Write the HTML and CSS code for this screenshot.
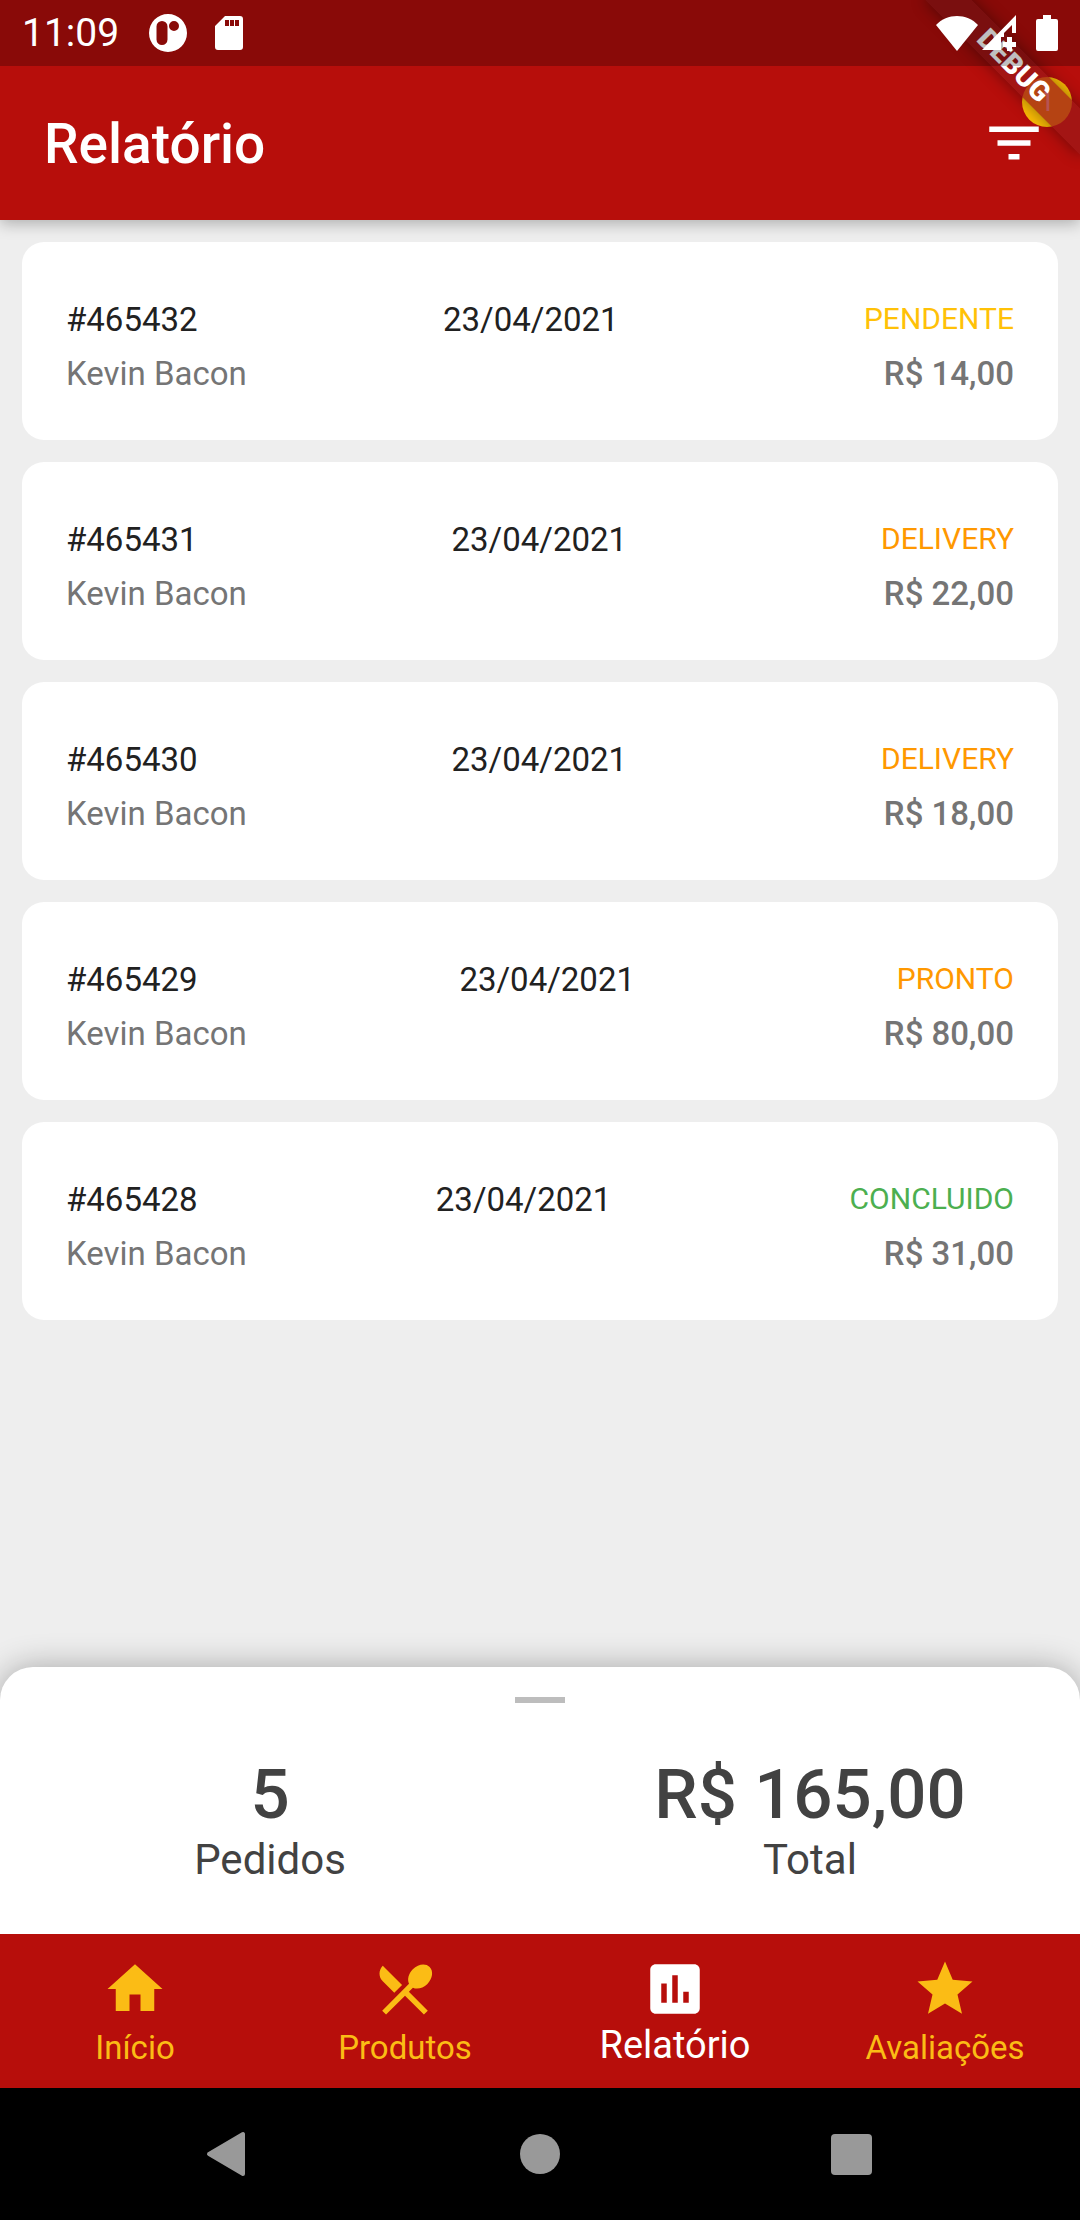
FILE: index.html
```html
<!DOCTYPE html>
<html lang="pt-BR">
<head>
<meta charset="utf-8">
<meta name="viewport" content="width=device-width, initial-scale=1">
<title>Relatório</title>
<link rel="stylesheet" href="styles.css">
</head>
<body>
<div class="screen">
  <header class="top">
    <div class="status-bar">
      <div class="status-group">
        <span class="clock">11:09</span>
        <svg class="status-app" viewBox="0 0 38 38" aria-hidden="true"><path fill="#fff" fill-rule="evenodd" d="M19 0a19 19 0 1 1 0 38a19 19 0 0 1 0-38zM13 7a5.500 5.500 0 0 0-5.500 5.500v13a5.500 5.500 0 0 0 11 0v-13a5.500 5.500 0 0 0-5.500-5.500zM25 7a5 5 0 1 0 0 10a5 5 0 0 0 0-10z"/></svg>
        <svg class="status-sd" viewBox="0 0 28 34" aria-hidden="true"><path fill="#fff" fill-rule="evenodd" d="M10 0h15a3 3 0 0 1 3 3v28a3 3 0 0 1-3 3H3a3 3 0 0 1-3-3V10zM10 4v6h4V4zM15 4v6h4V4zM20 4v6h4V4z"/></svg>
      </div>
      <div class="status-group status-right">
        <svg class="status-wifi" viewBox="0 0 42 35" aria-hidden="true"><path fill="#fff" d="M21 35L0 9C11-3 31-3 42 9z"/></svg>
        <svg class="status-signal" viewBox="0 0 34 36" aria-hidden="true"><path fill="#fff" d="M0 35L34 0v18h-4V10L22 18v4h-3v13z"/><path fill="#fff" d="M25 22h5v5h4v5h-4v4h-5v-4h-4v-5h4z"/></svg>
        <svg class="status-battery" viewBox="0 0 22 36" aria-hidden="true"><path fill="#fff" d="M7 0h8v4h5a2 2 0 0 1 2 2v28a2 2 0 0 1-2 2H2a2 2 0 0 1-2-2V6a2 2 0 0 1 2-2h5z"/></svg>
      </div>
    </div>
    <div class="app-bar">
      <h1 class="title">Relatório</h1>
      <button class="filter" type="button" aria-label="Filtrar">
        <svg class="icon" viewBox="0 0 24 24" aria-hidden="true"><path fill="currentColor" d="M10 18h4v-2h-4v2zM3 6v2h18V6H3zm3 7h12v-2H6v2z"/></svg>
        <span class="badge">1</span>
      </button>
    </div>
    <div class="debug-corner"><span class="debug-banner">DEBUG</span></div>
  </header>

  <main class="orders">
    <ul class="order-list">
      <li class="order">
        <div class="order-row"><span>#465432</span><time datetime="2021-04-23">23/04/2021</time><span class="state pending">PENDENTE</span></div>
        <div class="order-row detail"><span>Kevin Bacon</span><span class="price">R$ 14,00</span></div>
      </li>
      <li class="order">
        <div class="order-row"><span>#465431</span><time datetime="2021-04-23">23/04/2021</time><span class="state active">DELIVERY</span></div>
        <div class="order-row detail"><span>Kevin Bacon</span><span class="price">R$ 22,00</span></div>
      </li>
      <li class="order">
        <div class="order-row"><span>#465430</span><time datetime="2021-04-23">23/04/2021</time><span class="state active">DELIVERY</span></div>
        <div class="order-row detail"><span>Kevin Bacon</span><span class="price">R$ 18,00</span></div>
      </li>
      <li class="order">
        <div class="order-row"><span>#465429</span><time datetime="2021-04-23">23/04/2021</time><span class="state active">PRONTO</span></div>
        <div class="order-row detail"><span>Kevin Bacon</span><span class="price">R$ 80,00</span></div>
      </li>
      <li class="order">
        <div class="order-row"><span>#465428</span><time datetime="2021-04-23">23/04/2021</time><span class="state done">CONCLUIDO</span></div>
        <div class="order-row detail"><span>Kevin Bacon</span><span class="price">R$ 31,00</span></div>
      </li>
    </ul>
  </main>

  <section class="summary" aria-label="Resumo">
    <div class="handle"></div>
    <div class="totals">
      <div class="total"><strong class="total-value">5</strong><span class="total-label">Pedidos</span></div>
      <div class="total"><strong class="total-value">R$ 165,00</strong><span class="total-label">Total</span></div>
    </div>
  </section>

  <nav class="tabs">
    <a class="tab" href="#inicio">
      <svg class="icon" viewBox="0 0 24 24" aria-hidden="true"><path fill="currentColor" d="M10 20v-6h4v6h5v-8h3L12 3 2 12h3v8z"/></svg>
      <span class="tab-label">Início</span>
    </a>
    <a class="tab" href="#produtos">
      <svg class="icon" viewBox="0 0 24 24" aria-hidden="true"><path fill="currentColor" d="M8.100 13.340l2.830-2.830L3.910 3.500c-1.560 1.560-1.560 4.090 0 5.660l4.190 4.180zm6.780-1.810c1.530.71 3.680.21 5.270-1.380 1.910-1.910 2.280-4.650.81-6.120-1.460-1.460-4.200-1.100-6.120.81-1.590 1.590-2.090 3.740-1.380 5.270L3.700 19.870l1.410 1.410L12 14.410l6.880 6.880 1.410-1.410L13.410 13l1.470-1.470z"/></svg>
      <span class="tab-label">Produtos</span>
    </a>
    <a class="tab selected" href="#relatorio" aria-current="page">
      <svg class="icon" viewBox="0 0 24 24" aria-hidden="true"><path fill="currentColor" d="M19 3H5c-1.100 0-2 .9-2 2v14c0 1.100.9 2 2 2h14c1.100 0 2-.9 2-2V5c0-1.100-.9-2-2-2zM9 17H7v-7h2v7zm4 0h-2V7h2v10zm4 0h-2v-4h2v4z"/></svg>
      <span class="tab-label">Relatório</span>
    </a>
    <a class="tab" href="#avaliacoes">
      <svg class="icon" viewBox="0 0 24 24" aria-hidden="true"><path fill="currentColor" d="M12 17.270L18.180 21l-1.640-7.030L22 9.240l-7.190-.61L12 2 9.190 8.630 2 9.240l5.460 4.730L5.820 21z"/></svg>
      <span class="tab-label">Avaliações</span>
    </a>
  </nav>

  <div class="system-nav">
    <button class="system-button" type="button" aria-label="Voltar"><svg class="system-icon" viewBox="0 0 46 46" aria-hidden="true"><path fill="#999" stroke="#999" stroke-width="4" stroke-linejoin="round" d="M5 23L39 3v40z"/></svg></button>
    <button class="system-button" type="button" aria-label="Tela inicial"><svg class="system-icon" viewBox="0 0 46 46" aria-hidden="true"><circle cx="23" cy="23" r="20" fill="#999"/></svg></button>
    <button class="system-button" type="button" aria-label="Recentes"><svg class="system-icon" viewBox="0 0 46 46" aria-hidden="true"><rect x="1" y="3" width="41" height="41" rx="4" fill="#999"/></svg></button>
  </div>
</div>
</body>
</html>
```
FILE: styles.css
```css
* {
  box-sizing: border-box;
}

body {
  margin: 0;
  font-family: Roboto, "Liberation Sans", sans-serif;
  color: #212121;
  background: #eee;
}

button {
  border: 0;
  padding: 0;
  background: none;
  color: inherit;
  font: inherit;
}

.screen {
  display: flex;
  flex-direction: column;
  min-height: 100vh;
}

.icon {
  display: block;
  width: 66px;
  height: 66px;
}

/* Header */
.top {
  position: relative;
  background: #b70e0b;
  color: #fff;
  box-shadow: 0 4px 14px rgba(0, 0, 0, 0.26);
}

.status-bar {
  position: relative;
  z-index: 3;
  display: flex;
  align-items: center;
  justify-content: space-between;
  height: 66px;
  padding: 0 22px;
  background: rgba(0, 0, 0, 0.25);
}

.status-group {
  display: flex;
  align-items: center;
  gap: 28px;
}

.status-right {
  gap: 4px;
}

.clock {
  margin-right: 2px;
  font-size: 39px;
}

.status-app {
  width: 38px;
  height: 38px;
}

.status-sd {
  width: 28px;
  height: 34px;
}

.status-wifi {
  width: 42px;
  height: 35px;
}

.status-signal {
  width: 34px;
  height: 36px;
}

.status-battery {
  width: 22px;
  height: 36px;
  margin-left: 16px;
}

.app-bar {
  display: flex;
  align-items: center;
  justify-content: space-between;
  height: 154px;
  padding: 0 33px 0 44px;
}

.title {
  margin: 0;
  padding-top: 2px;
  font-size: 55px;
  font-weight: 500;
}

.filter {
  position: relative;
}

.badge {
  position: absolute;
  top: -33px;
  right: -25px;
  width: 50px;
  height: 50px;
  border-radius: 50%;
  background: #fbbc05;
  font-size: 28px;
  line-height: 50px;
  text-align: center;
}

.debug-corner {
  position: absolute;
  z-index: 2;
  inset: 0 0 0 auto;
  width: 220px;
  overflow: hidden;
}

.debug-banner {
  position: absolute;
  top: 49px;
  right: -44px;
  width: 220px;
  height: 33px;
  background: rgba(156, 24, 24, 0.74);
  box-shadow: 0 0 16px rgba(0, 0, 0, 0.4);
  font-size: 28px;
  font-weight: 900;
  line-height: 33px;
  text-align: center;
  transform: rotate(45deg);
}

/* Orders */
.orders {
  flex: 1;
  padding: 22px;
}

.order-list {
  display: flex;
  flex-direction: column;
  gap: 22px;
  margin: 0;
  padding: 0;
  list-style: none;
}

.order {
  padding: 51px 44px 39px;
  border-radius: 22px;
  background: #fff;
}

.order-row {
  display: flex;
  justify-content: space-between;
  font-size: 33px;
  line-height: 54px;
}

.detail {
  color: #757575;
}

.price {
  font-weight: 500;
}

.state {
  font-size: 30px;
  line-height: 52px;
}

.pending {
  color: #ffc107;
}

.active {
  color: #ff9800;
}

.done {
  color: #4caf50;
}

/* Summary sheet */
.summary {
  display: flex;
  flex-direction: column;
  align-items: center;
  gap: 52px;
  padding: 30px 0 49px;
  border-radius: 33px 33px 0 0;
  background: #fff;
  color: #424242;
  box-shadow: 0 0 32px rgba(0, 0, 0, 0.3);
}

.handle {
  width: 50px;
  height: 6px;
  background: #bdbdbd;
}

.totals {
  display: flex;
  width: 100%;
}

.total {
  display: flex;
  flex: 1;
  flex-direction: column;
  align-items: center;
}

.total-value {
  font-size: 69px;
  font-weight: 500;
  line-height: 80px;
}

.total-label {
  font-size: 42px;
  line-height: 50px;
}

/* Bottom tabs */
.tabs {
  position: relative;
  display: flex;
  height: 154px;
  background: #b70e0b;
}

.tab {
  display: flex;
  flex: 1;
  flex-direction: column;
  align-items: center;
  padding-top: 22px;
  color: #fbbc15;
  text-decoration: none;
}

.tab-label {
  font-size: 33px;
  line-height: 52px;
}

.selected {
  color: #fff;
}

.selected .tab-label {
  font-size: 38px;
  line-height: 46px;
}

/* System navigation */
.system-nav {
  display: flex;
  position: relative;
  height: 132px;
  padding: 0 70px;
  background: #000;
}

.system-button {
  display: flex;
  flex: 1;
  align-items: center;
  justify-content: center;
}

.system-icon {
  width: 46px;
  height: 46px;
}
```
